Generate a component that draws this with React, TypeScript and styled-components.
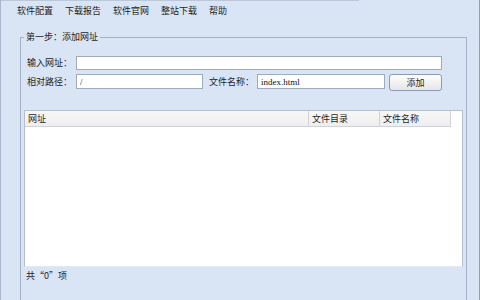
import styled, { createGlobalStyle } from "styled-components";

const GlobalStyle = createGlobalStyle`
  html, body {
    margin: 0;
    padding: 0;
    width: 480px;
    height: 300px;
    overflow: hidden;
    background: #d9e4f5;
  }
  * {
    box-sizing: border-box;
  }
`;

const Window = styled.div`
  width: 480px;
  height: 300px;
  overflow: hidden;
  background: #d9e4f5;
  border-left: 1px solid #a9b8cf;
  border-right: 1px solid #8d9fc0;
  font-family: "Noto Sans CJK SC", "Noto Sans", sans-serif;
  font-size: 9px;
  color: #1e1e1e;
`;

const TopEdge = styled.div`
  width: 358px;
  height: 1px;
  background: #bcc8da;
`;

const MenuBar = styled.nav`
  display: flex;
  gap: 12px;
  height: 19px;
  padding-left: 16px;
  align-items: center;
`;

const MenuItem = styled.span`
  line-height: 19px;
  white-space: nowrap;
`;

const Group = styled.fieldset`
  margin: 11px 0 0 19px;
  padding: 0;
  width: 447px;
  height: 290px;
  border: 1px solid #a3b2c8;
  border-bottom: none;
`;

const Legend = styled.legend`
  margin-left: 3px;
  padding: 0 2px;
  line-height: 12px;
  font-size: 9px;
`;

const Row = styled.div<{ $top: number }>`
  display: flex;
  align-items: flex-start;
  padding-left: 6px;
  margin-top: ${({ $top }) => $top}px;
`;

const Label = styled.span<{ $w: number; $h: number }>`
  width: ${({ $w }) => $w}px;
  line-height: ${({ $h }) => $h}px;
  white-space: nowrap;
  flex-shrink: 0;
`;

const Input = styled.input<{ $w: number; $h: number }>`
  width: ${({ $w }) => $w}px;
  height: ${({ $h }) => $h}px;
  border: 1px solid #9eabbf;
  background: #fff;
  padding: 0 3px;
  font-family: "Liberation Serif", "DejaVu Serif", serif;
  font-size: 9px;
  color: #111;
  outline: none;
  flex-shrink: 0;
`;

const Gap = styled.div<{ $w: number }>`
  width: ${({ $w }) => $w}px;
  flex-shrink: 0;
`;

const Button = styled.button`
  width: 53px;
  height: 17px;
  margin-left: 4px;
  padding: 0;
  border: 1px solid #8e9ab0;
  border-radius: 3px;
  background: linear-gradient(#fefefe, #f2f2f2 50%, #e3e5ea);
  font-family: "Noto Sans CJK SC", sans-serif;
  font-size: 9px;
  color: #1e1e1e;
  flex-shrink: 0;
`;

const ListView = styled.div`
  margin: 19px 3px 0 3px;
  height: 157px;
  background: #fff;
  border: 1px solid #b4bfce;
  border-bottom: 1px solid #e3e9f2;
`;

const HeaderRow = styled.div`
  display: flex;
  height: 16px;
`;

const HeaderCell = styled.div<{ $w: number }>`
  width: ${({ $w }) => $w}px;
  height: 16px;
  line-height: 15px;
  padding-left: 3px;
  background: linear-gradient(#f7f7f7, #eeeeee);
  border-right: 1px solid #cfd3d9;
  border-bottom: 1px solid #cfd3d9;
  white-space: nowrap;
  flex-shrink: 0;
`;

const Status = styled.div`
  padding-left: 5px;
  line-height: 18px;
`;

const menus = ["软件配置", "下载报告", "软件官网", "整站下载", "帮助"];

const columns = [
  { title: "网址", w: 284 },
  { title: "文件目录", w: 71 },
  { title: "文件名称", w: 71 },
];

export default function App() {
  return (
    <>
      <GlobalStyle />
      <Window>
        <TopEdge />
        <MenuBar>
          {menus.map((m) => (
            <MenuItem key={m}>{m}</MenuItem>
          ))}
        </MenuBar>
        <Group>
          <Legend>第一步：添加网址</Legend>
          <Row $top={13}>
            <Label $w={49} $h={14}>输入网址：</Label>
            <Input $w={366} $h={14} defaultValue="" />
          </Row>
          <Row $top={4}>
            <Label $w={49} $h={15}>相对路径：</Label>
            <Input $w={127} $h={15} defaultValue="/" />
            <Gap $w={6} />
            <Label $w={48} $h={15}>文件名称：</Label>
            <Input $w={128} $h={15} defaultValue="index.html" />
            <Button>添加</Button>
          </Row>
          <ListView>
            <HeaderRow>
              {columns.map((c) => (
                <HeaderCell key={c.title} $w={c.w}>
                  {c.title}
                </HeaderCell>
              ))}
            </HeaderRow>
          </ListView>
          <Status>共“0”项</Status>
        </Group>
      </Window>
    </>
  );
}
